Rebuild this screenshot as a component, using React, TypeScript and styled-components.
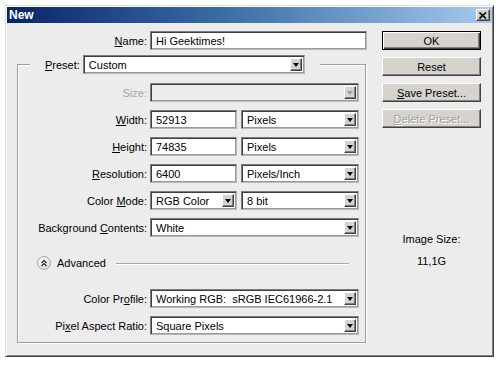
import React from 'react';
import styled, { createGlobalStyle } from 'styled-components';

const GlobalStyle = createGlobalStyle`
    html, body {
        margin: 0;
        padding: 0;
        background: #ffffff;
    }
    body {
        font-family: "Liberation Sans", Arial, sans-serif;
        font-size: 11px;
        color: #000;
    }
`;

const dialogBg = '#ececec';
const faceBg = '#d6d3ce';

const Window = styled.div`
    margin: 5px 0 0 5px;
    width: 489px;
    height: 352px;
    box-sizing: border-box;
    background: ${dialogBg};
    border: 1px solid;
    border-color: #dcdcdc #404040 #404040 #dcdcdc;
    box-shadow: inset 1px 1px #ffffff, inset -1px -1px #808080;
    padding: 1px;
    display: flex;
    flex-direction: column;
`;

const TitleBar = styled.div`
    height: 16px;
    display: flex;
    align-items: center;
    justify-content: space-between;
    padding: 0 2px 0 2px;
    background: linear-gradient(to right, #0a246a 0%, #3a6ea5 45%, #a6caf0 100%);
    color: #fff;
    font-weight: bold;
    font-size: 12px;
`;

const CloseButton = styled.div`
    width: 14px;
    height: 12px;
    box-sizing: border-box;
    background: ${faceBg};
    border: 1px solid;
    border-color: #fff #404040 #404040 #fff;
    box-shadow: inset -1px -1px #808080;
    display: flex;
    align-items: center;
    justify-content: center;
    color: #000;
`;

const Body = styled.div`
    display: flex;
    padding-top: 8px;
`;

const LeftColumn = styled.div`
    width: 363px;
    display: flex;
    flex-direction: column;
`;

const NameRow = styled.div`
    display: flex;
    align-items: center;
    gap: 3px;
`;

const Label = styled.span<{ $disabled?: boolean; $w?: number }>`
    width: ${p => (p.$w ? `${p.$w}px` : 'auto')};
    text-align: right;
    white-space: nowrap;
    color: ${p => (p.$disabled ? '#a4a4a4' : '#000')};
`;

const Key = styled.span`
    text-decoration: underline;
`;

const Field = styled.div<{ $w: number; $disabled?: boolean }>`
    width: ${p => p.$w}px;
    height: 19px;
    box-sizing: border-box;
    border: 1px solid;
    border-color: #7c7c7c #b8b8b8 #b8b8b8 #7c7c7c;
    box-shadow: inset 1px 1px #404040, inset -1px -1px #9a9a9a;
    background: ${p => (p.$disabled ? dialogBg : '#fff')};
    display: flex;
    align-items: center;
    padding: 0 2px 0 5px;
    white-space: pre;
`;

const FieldText = styled.span`
    flex: 1;
    overflow: hidden;
`;

const ArrowButton = styled.div`
    width: 12px;
    height: 13px;
    box-sizing: border-box;
    background: ${faceBg};
    border: 1px solid;
    border-color: #fff #404040 #404040 #fff;
    box-shadow: inset -1px -1px #808080;
    display: flex;
    align-items: center;
    justify-content: center;
`;

const Triangle = styled.div<{ $disabled?: boolean }>`
    width: 0;
    height: 0;
    border-left: 3.5px solid transparent;
    border-right: 3.5px solid transparent;
    border-top: 4px solid ${p => (p.$disabled ? '#a0a0a0' : '#000')};
`;

const Group = styled.fieldset`
    margin: 5px 0 0 10px;
    width: 349px;
    box-sizing: border-box;
    padding: 0 6px 7px 0;
    border: 1px solid #9d9d9d;
    box-shadow: inset 1px 1px #ffffff, 1px 1px #ffffff;
    min-width: 0;
`;

const Legend = styled.legend`
    margin-left: 12px;
    padding: 0 15px;
    background: ${dialogBg};
    display: flex;
    align-items: center;
    gap: 3px;
`;

const Rows = styled.div<{ $top: number }>`
    display: grid;
    grid-template-columns: 129px 209px;
    column-gap: 3px;
    row-gap: 8px;
    align-items: center;
    margin-top: ${p => p.$top}px;
`;

const Pair = styled.div`
    display: flex;
    gap: 4px;
`;

const AdvancedRow = styled.div`
    display: flex;
    align-items: center;
    margin: 19px 0 0 19px;
    gap: 6px;
`;

const AdvancedIcon = styled.div`
    width: 14px;
    height: 14px;
    border-radius: 50%;
    box-sizing: border-box;
    border: 1px solid #a8a8a8;
    background: radial-gradient(circle at 40% 35%, #ffffff 0%, #e4e4e4 60%, #c8c8c8 100%);
    display: flex;
    align-items: center;
    justify-content: center;
`;

const EtchLine = styled.div`
    flex: 1;
    height: 1px;
    background: #a8a8a8;
    box-shadow: 0 1px #ffffff;
    margin: 1px 10px 0 4px;
`;

const RightColumn = styled.div`
    padding-left: 12px;
    display: flex;
    flex-direction: column;
    width: 99px;
`;

const Button = styled.div<{ $default?: boolean; $disabled?: boolean }>`
    height: 19px;
    box-sizing: border-box;
    background: ${faceBg};
    border: 1px solid;
    border-color: ${p => (p.$default ? '#000' : '#fff #404040 #404040 #fff')};
    box-shadow: ${p =>
        p.$default
            ? 'inset 1px 1px #fff, inset -1px -1px #404040, inset -2px -2px #808080'
            : 'inset -1px -1px #808080'};
    display: flex;
    align-items: center;
    justify-content: center;
    margin-bottom: 7px;
    color: ${p => (p.$disabled ? '#a0a0a0' : '#000')};
    text-shadow: ${p => (p.$disabled ? '1px 1px #ffffff' : 'none')};
`;

const SizeInfo = styled.div`
    margin-top: 93px;
    text-align: center;
    line-height: 22px;
`;

type SelectProps = { value: string; width: number; disabled?: boolean };

const Select: React.FC<SelectProps> = ({ value, width, disabled }) => (
    <Field $w={width} $disabled={disabled}>
        <FieldText>{value}</FieldText>
        <ArrowButton>
            <Triangle $disabled={disabled} />
        </ArrowButton>
    </Field>
);

const Input: React.FC<{ value: string; width: number }> = ({ value, width }) => (
    <Field $w={width}>
        <FieldText>{value}</FieldText>
    </Field>
);

const App: React.FC = () => {
    return (
        <>
            <GlobalStyle />
            <Window>
                <TitleBar>
                    <span>New</span>
                    <CloseButton>
                        <svg width="8" height="7" viewBox="0 0 8 7">
                            <path d="M0.5 0.5 L7 6.5 M7 0.5 L0.5 6.5" stroke="#000" strokeWidth="1.6" />
                        </svg>
                    </CloseButton>
                </TitleBar>
                <Body>
                    <LeftColumn>
                        <NameRow>
                            <Label $w={140}><Key>N</Key>ame:</Label>
                            <Input value="Hi Geektimes!" width={217} />
                        </NameRow>
                        <Group>
                            <Legend>
                                <Label><Key>P</Key>reset:</Label>
                                <Select value="Custom" width={222} />
                            </Legend>
                            <Rows $top={9}>
                                <Label $disabled>Size:</Label>
                                <Select value="" width={209} disabled />

                                <Label><Key>W</Key>idth:</Label>
                                <Pair>
                                    <Input value="52913" width={87} />
                                    <Select value="Pixels" width={118} />
                                </Pair>

                                <Label><Key>H</Key>eight:</Label>
                                <Pair>
                                    <Input value="74835" width={87} />
                                    <Select value="Pixels" width={118} />
                                </Pair>

                                <Label><Key>R</Key>esolution:</Label>
                                <Pair>
                                    <Input value="6400" width={87} />
                                    <Select value="Pixels/Inch" width={118} />
                                </Pair>

                                <Label>Color <Key>M</Key>ode:</Label>
                                <Pair>
                                    <Select value="RGB Color" width={87} />
                                    <Select value="8 bit" width={118} />
                                </Pair>

                                <Label>Background <Key>C</Key>ontents:</Label>
                                <Select value="White" width={209} />
                            </Rows>
                            <AdvancedRow>
                                <AdvancedIcon>
                                    <svg width="8" height="8" viewBox="0 0 8 8">
                                        <path d="M1.5 4 L4 1.5 L6.5 4 M1.5 7 L4 4.5 L6.5 7" stroke="#222" strokeWidth="1.2" fill="none" />
                                    </svg>
                                </AdvancedIcon>
                                <span>Advanced</span>
                                <EtchLine />
                            </AdvancedRow>
                            <Rows $top={19}>
                                <Label>Color Pr<Key>o</Key>file:</Label>
                                <Select value="Working RGB:  sRGB IEC61966-2.1" width={209} />

                                <Label>Pi<Key>x</Key>el Aspect Ratio:</Label>
                                <Select value="Square Pixels" width={209} />
                            </Rows>
                        </Group>
                    </LeftColumn>
                    <RightColumn>
                        <Button $default>OK</Button>
                        <Button>Reset</Button>
                        <Button><span><Key>S</Key>ave Preset...</span></Button>
                        <Button $disabled><span><Key>D</Key>elete Preset...</span></Button>
                        <SizeInfo>
                            <div>Image Size:</div>
                            <div>11,1G</div>
                        </SizeInfo>
                    </RightColumn>
                </Body>
            </Window>
        </>
    );
};

export default App;
